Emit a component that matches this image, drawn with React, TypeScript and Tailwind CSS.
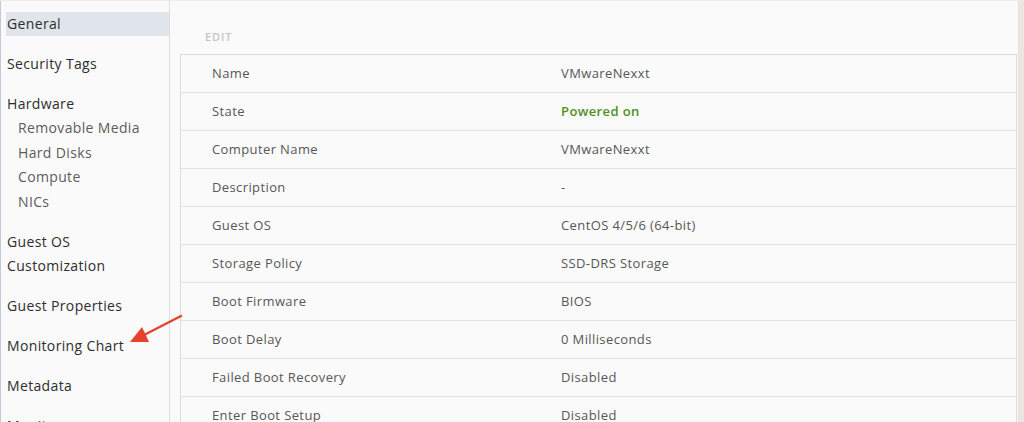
import React from "react";

const font = { fontFamily: '"Open Sans", "Liberation Sans", sans-serif' };

type NavItem = { label: string; sub?: boolean; active?: boolean; gapBefore?: boolean };

const nav: NavItem[] = [
  { label: "General", active: true },
  { label: "Security Tags", gapBefore: true },
  { label: "Hardware", gapBefore: true },
  { label: "Removable Media", sub: true },
  { label: "Hard Disks", sub: true },
  { label: "Compute", sub: true },
  { label: "NICs", sub: true },
  { label: "Guest OS", gapBefore: true },
  { label: "Customization" },
  { label: "Guest Properties", gapBefore: true },
  { label: "Monitoring Chart", gapBefore: true },
  { label: "Metadata", gapBefore: true },
  { label: "Monitor", gapBefore: true },
];

const rows: { label: string; value: string; ok?: boolean }[] = [
  { label: "Name", value: "VMwareNexxt" },
  { label: "State", value: "Powered on", ok: true },
  { label: "Computer Name", value: "VMwareNexxt" },
  { label: "Description", value: "-" },
  { label: "Guest OS", value: "CentOS 4/5/6 (64-bit)" },
  { label: "Storage Policy", value: "SSD-DRS Storage" },
  { label: "Boot Firmware", value: "BIOS" },
  { label: "Boot Delay", value: "0 Milliseconds" },
  { label: "Failed Boot Recovery", value: "Disabled" },
  { label: "Enter Boot Setup", value: "Disabled" },
];

export default function App() {
  return (
    <div
      className="relative flex w-[1024px] h-[422px] overflow-hidden bg-[#fafafa] border-t border-[#ececec]"
      style={font}
    >
      {/* sidebar */}
      <div className="w-[170px] shrink-0 border-l border-[#c4c9d8] border-r border-r-[#dedede] pt-[11px] pl-[5px]">
        {nav.map((item) => (
          <div
            key={item.label}
            className={
              "leading-[24px] text-[14px] tracking-[0.025em] whitespace-nowrap " +
              (item.gapBefore ? "mt-[16px] " : "") +
              (item.sub ? "h-[24.5px] pl-[12px] text-[#5c5c5c]" : "h-[24px] pl-[1px] text-[#2e2e2e]") +
              (item.active ? " bg-[#dfe5ea]" : "")
            }
          >
            {item.label}
          </div>
        ))}
      </div>

      {/* main */}
      <div className="flex-1 pl-[10px] pr-[1px]">
        <div className="h-[53px] pl-[25px] pt-[28px] text-[11px] leading-[16px] tracking-[0.08em] font-semibold text-[#c4c4c4]">
          EDIT
        </div>
        <div className="border-l border-t border-r border-[#dcdcdc] bg-[#fafafa]">
          {rows.map((r) => (
            <div
              key={r.label}
              className="flex items-center h-[38px] border-b border-[#e2e2e2] text-[13px] tracking-[0.03em] text-[#575757]"
            >
              <div className="w-[380px] pl-[31px]">{r.label}</div>
              <div className={r.ok ? "text-[#4f8f22] font-semibold" : ""}>{r.value}</div>
            </div>
          ))}
        </div>
      </div>

      {/* right strip */}
      <div className="w-[6px] shrink-0 border-l border-[#e4e0de] bg-[#ece6e3]" />

      {/* annotation arrow */}
      <svg
        className="absolute left-[120px] top-[305px]"
        width="70"
        height="45"
        viewBox="0 0 70 45"
      >
        <line x1="61" y1="10" x2="24" y2="29" stroke="#e5432d" strokeWidth="2.5" strokeLinecap="round" />
        <polygon points="10,36 22,21 29,36" fill="#e5432d" />
      </svg>
    </div>
  );
}
